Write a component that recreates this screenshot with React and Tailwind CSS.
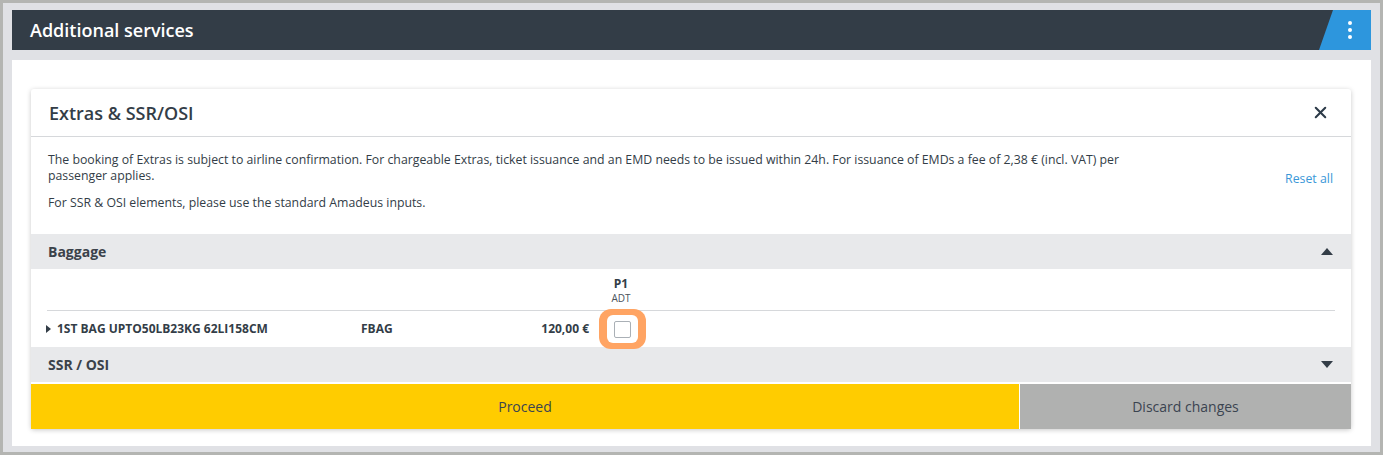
import { X } from 'lucide-react';

function Caret({ up }) {
  return (
    <svg width="12" height="7" viewBox="0 0 12 7" className="fill-[#333d47]">
      {up ? <path d="M0 7 L6 0 L12 7 Z" /> : <path d="M0 0 L12 0 L6 7 Z" />}
    </svg>
  );
}

function SectionHeader({ title, open }) {
  return (
    <div className="flex items-center justify-between bg-[#e8e9eb] h-[35px] pl-[17px] pr-[18px]">
      <span className="text-[14px] font-bold text-[#3b424a]">{title}</span>
      <Caret up={open} />
    </div>
  );
}

export default function App() {
  return (
    <div
      className="w-[1383px] h-[455px] bg-[#e0e1e5] border-[3px] border-[#b4b5b2] pt-[7px] px-[9px] overflow-hidden"
      style={{ fontFamily: '"Open Sans", "Liberation Sans", sans-serif' }}
    >
      {/* Page header */}
      <div className="relative h-[40px] bg-[#333d47] flex items-center pl-[18px] overflow-hidden">
        <h1 className="text-white text-[18px] font-semibold">Additional services</h1>
        <div className="absolute right-0 top-0 h-full w-[52px] bg-[#2d96dd] [clip-path:polygon(14px_0,100%_0,100%_100%,0_100%)] flex items-center justify-center pl-[10px]">
          <div className="flex flex-col gap-[3px]">
            <span className="w-[4px] h-[4px] rounded-full bg-white" />
            <span className="w-[4px] h-[4px] rounded-full bg-white" />
            <span className="w-[4px] h-[4px] rounded-full bg-white" />
          </div>
        </div>
      </div>

      {/* White panel */}
      <div className="mt-[10px] bg-white h-[386px] pt-[29px] pl-[19px] pr-[20px]">
        <div className="bg-white shadow-[0_1px_5px_rgba(0,0,0,0.22)] rounded-[3px]">
          <div className="h-[48px] flex items-center justify-between pl-[18px] pr-[21px] border-b border-[#d6d8db]">
            <h2 className="text-[18px] font-semibold text-[#333d47] pt-[1px]">Extras &amp; SSR/OSI</h2>
            <X size={19} strokeWidth={2.6} className="text-[#2c3a48]" />
          </div>

          <div className="flex items-start justify-between pl-[17px] pr-[18px] pt-[15px] pb-[23px] text-[12.3px] leading-[16px] text-[#333d47]">
            <div className="w-[1100px]">
              <p>
                The booking of Extras is subject to airline confirmation. For chargeable Extras, ticket issuance and an EMD needs to be issued within 24h. For issuance of EMDs a fee of 2,38 € (incl. VAT) per passenger applies.
              </p>
              <p className="mt-[11px]">For SSR &amp; OSI elements, please use the standard Amadeus inputs.</p>
            </div>
            <a className="mt-[19px] text-[#3a97d8]">Reset all</a>
          </div>

          <SectionHeader title="Baggage" open />

          <div className="px-[16px]">
            <div className="flex flex-col items-center w-[30px] ml-[559px] pt-[7px] h-[41px]">
              <span className="text-[12px] font-bold text-[#333d47] leading-[16px]">P1</span>
              <span className="text-[10px] text-[#4a525a] leading-[13px]">ADT</span>
            </div>
            <div className="border-t border-[#d6d8db] h-[37px] flex items-center text-[12px] font-bold text-[#333d47]">
              <svg width="5" height="8" viewBox="0 0 5 8" className="fill-[#333d47] ml-[-1px]">
                <path d="M0 0 L5 4 L0 8 Z" />
              </svg>
              <span className="ml-[6px] w-[304px]">1ST BAG UPTO50LB23KG 62LI158CM</span>
              <span className="w-[100px]">FBAG</span>
              <span className="w-[128px] text-right">120,00 €</span>
              <div className="ml-[10px] w-[47px] h-[40px] rounded-[12px] bg-[#ffa463] flex items-center justify-center">
                <div className="w-[31px] h-[28px] rounded-[6px] bg-white flex items-center justify-center">
                  <div className="w-[17px] h-[17px] rounded-[2px] border border-[#aab0b6] bg-white" />
                </div>
              </div>
            </div>
          </div>

          <SectionHeader title="SSR / OSI" />

          <div className="flex mt-[2px] h-[45px] text-[14px] text-[#3b4450]">
            <button className="flex-1 bg-[#ffcc00]">Proceed</button>
            <button className="w-[331px] ml-[1px] bg-[#b0b1b0]">Discard changes</button>
          </div>
        </div>
      </div>
    </div>
  );
}
